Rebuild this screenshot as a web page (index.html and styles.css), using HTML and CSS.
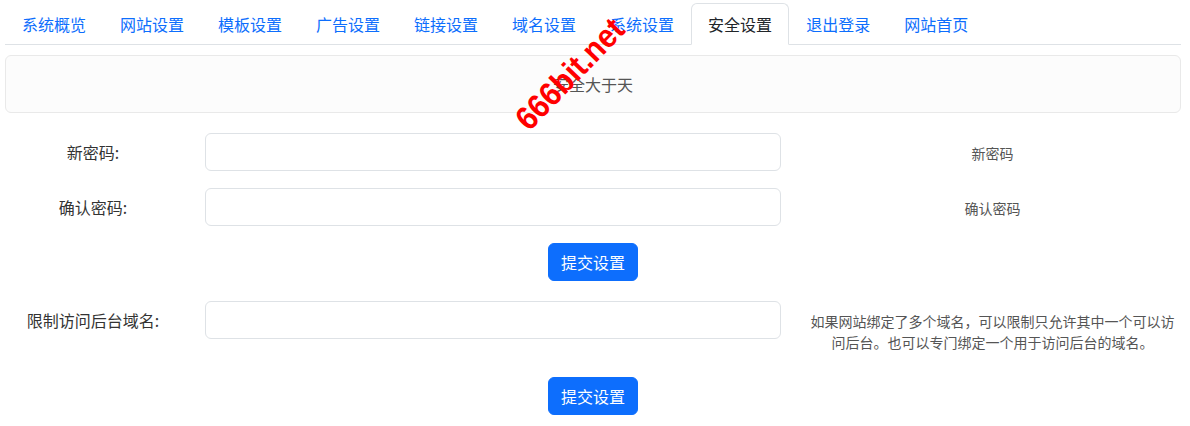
FILE: index.html
```html
<!DOCTYPE html>
<html lang="zh-CN">
<head>
<meta charset="utf-8">
<title>安全设置</title>
<link rel="stylesheet" href="styles.css">
</head>
<body>
<div class="page">
  <ul class="tabs">
    <li><a href="#">系统概览</a></li>
    <li><a href="#">网站设置</a></li>
    <li><a href="#">模板设置</a></li>
    <li><a href="#">广告设置</a></li>
    <li><a href="#">链接设置</a></li>
    <li><a href="#">域名设置</a></li>
    <li><a href="#">系统设置</a></li>
    <li><a href="#" class="active">安全设置</a></li>
    <li><a href="#">退出登录</a></li>
    <li><a href="#">网站首页</a></li>
  </ul>

  <div class="notice">安全大于天</div>

  <form class="settings">
    <div class="field">
      <label class="field-label">新密码:</label>
      <input class="field-input" type="password">
      <div class="field-help">新密码</div>
    </div>
    <div class="field">
      <label class="field-label">确认密码:</label>
      <input class="field-input" type="password">
      <div class="field-help">确认密码</div>
    </div>
    <div class="actions">
      <button type="button" class="btn">提交设置</button>
    </div>
    <div class="field">
      <label class="field-label">限制访问后台域名:</label>
      <input class="field-input" type="text">
      <div class="field-help">如果网站绑定了多个域名，可以限制只允许其中一个可以访问后台。也可以专门绑定一个用于访问后台的域名。</div>
    </div>
    <div class="actions actions-last">
      <button type="button" class="btn">提交设置</button>
    </div>
  </form>

  <span class="watermark">666bit.net</span>
</div>
</body>
</html>
```

FILE: styles.css
```css
* {
  box-sizing: border-box;
}

html, body {
  margin: 0;
  padding: 0;
  background: #fff;
}

body {
  font-family: "Noto Sans CJK SC", "Noto Sans", "Liberation Sans", sans-serif;
  font-size: 16px;
  line-height: 1.5;
  color: #212529;
}

.page {
  position: relative;
  width: 1190px;
  padding: 3px 9px 0 5px;
}

.tabs {
  list-style: none;
  margin: 0 0 10px 0;
  padding: 0;
  display: flex;
  border-bottom: 1px solid #dee2e6;
}

.tabs li {
  margin-bottom: -1px;
}

.tabs a {
  display: block;
  padding: 8px 16px;
  border: 1px solid transparent;
  border-top-left-radius: 6px;
  border-top-right-radius: 6px;
  color: #0d6efd;
  text-decoration: none;
  line-height: 24px;
}

.tabs a.active {
  color: #212529;
  background: #fff;
  border-color: #dee2e6 #dee2e6 #fff;
}

.notice {
  background: #fcfcfc;
  border: 1px solid #e9e9e9;
  border-radius: 6px;
  padding: 16px;
  text-align: center;
  color: #555;
  line-height: 24px;
  margin-bottom: 20px;
}

.settings {
  margin: 0;
}

.field {
  display: grid;
  grid-template-columns: 176px 575px 1fr;
  column-gap: 24px;
  align-items: start;
  margin-bottom: 17px;
}

.field-label {
  padding-top: 7px;
  text-align: center;
  line-height: 24px;
  color: #333;
}

.field-input {
  height: 38px;
  width: 576px;
  border: 1px solid #dee2e6;
  border-radius: 6px;
  padding: 6px 12px;
  font: inherit;
  background: #fff;
  outline: none;
}

.field-help {
  padding-top: 10px;
  font-size: 14px;
  line-height: 21px;
  color: #555;
  text-align: center;
}

.actions {
  display: flex;
  justify-content: center;
  margin-bottom: 20px;
}

.actions-last {
  margin-top: 24px;
}

.btn {
  font: inherit;
  line-height: 24px;
  padding: 6px 12px;
  color: #fff;
  background: #0d6efd;
  border: 1px solid #0d6efd;
  border-radius: 6px;
  cursor: pointer;
}

.watermark {
  position: absolute;
  left: 570px;
  top: 74px;
  transform: translate(-50%, -50%) rotate(-46deg) scaleY(1.1);
  font-family: "Liberation Sans", Arial, sans-serif;
  font-weight: bold;
  font-size: 30px;
  line-height: 1;
  color: #f00;
  white-space: nowrap;
  pointer-events: none;
}
```
